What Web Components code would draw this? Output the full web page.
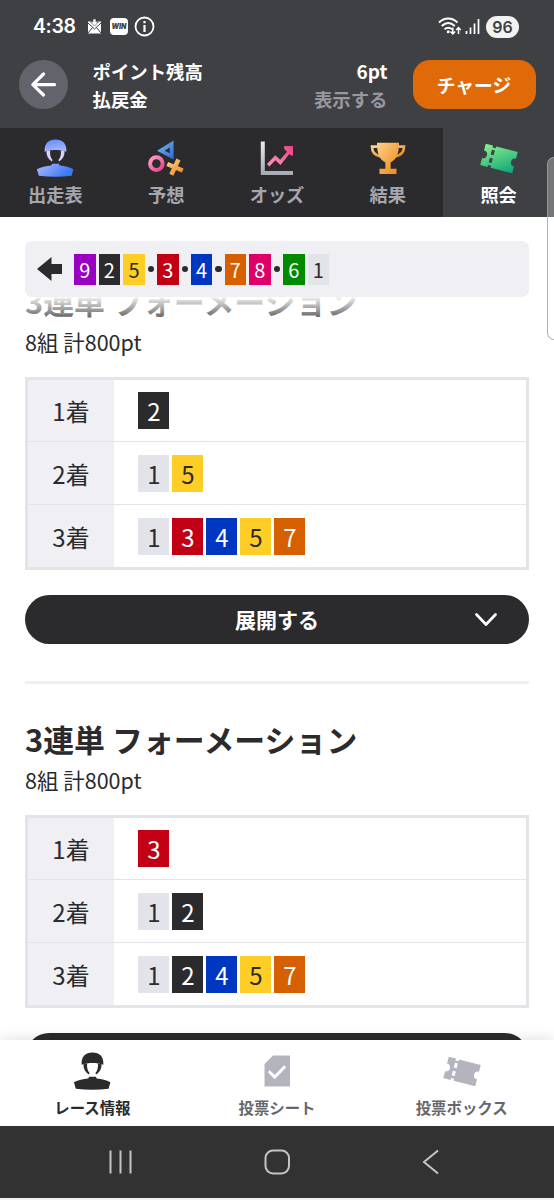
<!DOCTYPE html>
<html lang="ja">
<head>
<meta charset="utf-8">
<meta name="viewport" content="width=device-width">
<title>照会</title>
<style>
  body {
    margin: 0;
    background: #fff;
    color: #2b2b2d;
    font-family: "Noto Sans CJK JP", "Noto Sans", sans-serif;
  }
</style>
</head>
<body>
<race-app>
  <status-bar slot="top"></status-bar>
  <point-header slot="top" points="6pt"></point-header>
  <tab-bar slot="top">
    <tab-item icon="rider">出走表</tab-item>
    <tab-item icon="marks">予想</tab-item>
    <tab-item icon="odds">オッズ</tab-item>
    <tab-item icon="trophy">結果</tab-item>
    <tab-item icon="ticket" active>照会</tab-item>
  </tab-bar>

  <line-forecast slot="pinned" order="925.3.4.78.61"></line-forecast>

  <bet-card first="2" second="15" third="13457">
    <span slot="heading">3連単 フォーメーション</span>
    <span slot="summary">8組 計800pt</span>
  </bet-card>
  <bet-card first="3" second="12" third="12457">
    <span slot="heading">3連単 フォーメーション</span>
    <span slot="summary">8組 計800pt</span>
  </bet-card>

  <bottom-nav slot="bottom">
    <nav-item icon="rider" active>レース情報</nav-item>
    <nav-item icon="sheet">投票シート</nav-item>
    <nav-item icon="ticket">投票ボックス</nav-item>
  </bottom-nav>
  <system-nav slot="bottom"></system-nav>
</race-app>

<script>
const icons = {
  rider: `
<svg width="38" height="38" viewBox="0 0 38 38">
  <defs>
    <linearGradient id="r1" x1="0" y1="0" x2="0.3" y2="1"><stop offset="0" stop-color="#5a8bf8"/><stop offset="1" stop-color="#a9b4ff"/></linearGradient>
    <linearGradient id="r2" x1="0" y1="0" x2="1" y2="0.4"><stop offset="0" stop-color="#b3baff"/><stop offset="1" stop-color="#3978f5"/></linearGradient>
  </defs>
  <path fill="var(--ink, url(#r1))" d="M8.6 12.8C8.2 4.500 12.300.6 19.500.6s11.300 3.900 10.900 12.200c-7-2.300-14.800-2.300-21.800 0z"/>
  <path fill="var(--ink, #d5d3fb)" d="M10.400 12.200l3.700-.8c-.3 4.200.4 7.200 2.500 9.700l-.8 1.400c-3.600-2.400-5.400-5.700-5.400-10.300zM28.600 12.200l-3.700-.8c.3 4.200-.4 7.200-2.500 9.700l.8 1.400c3.600-2.400 5.400-5.700 5.400-10.300z"/>
  <path fill="var(--ink, url(#r2))" d="M.9 30.200c4.500-2 9.200-3.200 14.300-3.700l1-1.800h6.600l1 1.800c5.100.5 9.300 1.700 13.600 3.700l-1.800 6.600c-10.500 1.400-21.800 1.400-32.800 0z"/>
</svg>`,
  marks: `
<svg width="37" height="38" viewBox="0 0 37 38">
  <defs>
    <linearGradient id="m1" x1="0" y1="0" x2="1" y2="1"><stop offset="0" stop-color="#77c4ef"/><stop offset="1" stop-color="#2e63dc"/></linearGradient>
    <linearGradient id="m2" x1="0" y1="0" x2="1" y2="1"><stop offset="0" stop-color="#ff9fc4"/><stop offset="1" stop-color="#e83f8b"/></linearGradient>
    <linearGradient id="m3" x1="0" y1="0" x2="1" y2="1"><stop offset="0" stop-color="#ffd08a"/><stop offset="1" stop-color="#e88a20"/></linearGradient>
  </defs>
  <path fill="url(#m1)" fill-rule="evenodd" d="M25.600 1.500V20.500L9 11.800zM21.800 8.600L16.600 11.700 21.800 14.200z"/>
  <circle cx="8.400" cy="24.600" r="6.300" fill="none" stroke="url(#m2)" stroke-width="4"/>
  <path fill="none" stroke="url(#m3)" stroke-width="4.500" d="M30.500 20.500L23.300 35.800M19.300 25L34.700 31.500"/>
</svg>`,
  odds: `
<svg width="34" height="38" viewBox="0 0 34 38">
  <defs>
    <linearGradient id="o1" x1="0" y1="0" x2="0" y2="1"><stop offset="0" stop-color="#e9edf0"/><stop offset="1" stop-color="#a4a9b2"/></linearGradient>
    <linearGradient id="o2" x1="0" y1="1" x2="1" y2="0"><stop offset="0" stop-color="#ff9abf"/><stop offset="1" stop-color="#ea4186"/></linearGradient>
  </defs>
  <path fill="url(#o1)" d="M.8 2.500H4.800V32H33V36H.8z"/>
  <path fill="url(#o2)" d="M7 25L15.300 16.200 20.200 20.800 27.100 12.700 24.200 10V7H33V16.500H31L29.300 15 20.500 25.900 15.400 21.200 9.300 27.500z"/>
</svg>`,
  trophy: `
<svg width="36" height="38" viewBox="0 0 36 38">
  <defs>
    <linearGradient id="t1" x1="0" y1="0" x2="1" y2="1"><stop offset="0" stop-color="#ffd28c"/><stop offset="1" stop-color="#ed8518"/></linearGradient>
  </defs>
  <g fill="none" stroke="url(#t1)" stroke-width="2.600">
    <path d="M8 7.600H2C2 13.500 4.500 16.500 10.500 17.500M28 7.600H34C34 13.500 31.500 16.500 25.500 17.500"/>
  </g>
  <path fill="url(#t1)" d="M7 3.800H29C29 14 27 20.500 20.600 23.400V29.800H26.500V35H9.500V29.800H15.400V23.400C9 20.500 7 14 7 3.800z"/>
</svg>`,
  ticket: `
<svg width="38" height="38" viewBox="0 0 38 38">
  <defs>
    <linearGradient id="k1" x1="0" y1="0" x2="1" y2="1"><stop offset="0" stop-color="#8cf08b"/><stop offset="1" stop-color="#08a579"/></linearGradient>
  </defs>
  <g transform="rotate(14.500 19 19.500)" fill="var(--ink, url(#k1))">
    <path d="M2.500 8.500H10V10.500H13.200V8.500H35.500V15.400A4 4 0 0 0 35.500 23.400V30.500H13.200V28.500H10V30.500H2.500V23.400A4 4 0 0 0 2.500 15.400zM10 12.800V17.600H13V12.800zM10 21V25.800H13V21z" fill-rule="evenodd"/>
  </g>
</svg>`,
  sheet: `
<svg width="38" height="38" viewBox="0 0 38 38">
  <path fill="var(--ink)" d="M15 3.500H32V34.500H6.500V12z"/>
  <path fill="none" stroke="#fff" stroke-width="3" d="M10.800 19.200L16.700 25 27.200 14.200"/>
</svg>`,
};

class BaseElement extends HTMLElement {
  constructor() {
    super();
    this.root = this.attachShadow({mode: 'open'});
  }

  connectedCallback() {
    this.root.innerHTML = this.render();
  }
}

class RaceAppElement extends BaseElement {
  render() {
    return `
<style>
  :host {
    display: flex;
    flex-flow: column;
    height: 1200px;
    position: relative;
    overflow: hidden;
  }
  main {
    flex: 1;
    min-height: 0;
    padding: 62px 25px 0;
    overflow: hidden;
    position: relative;
  }
  #pinned {
    position: absolute;
    top: 0;
    left: 0;
    right: 0;
    padding: 24px 25px 29px;
    background: linear-gradient(#fff 80px, rgba(255, 255, 255, 0.9) 81px, rgba(255, 255, 255, 0));
  }
  /* edge panel handle, sits over the tabs and the page */
  #handle {
    position: absolute;
    top: 157px;
    right: -10px;
    width: 15px;
    height: 181px;
    border: 1.500px solid rgba(160, 160, 160, 0.8);
    border-radius: 7px;
    background: linear-gradient(rgba(200, 200, 200, 0.4) 59px, rgba(255, 255, 255, 0.4) 59px);
  }
</style>
<slot name="top"></slot>
<main>
  <slot></slot>
  <div id="pinned"><slot name="pinned"></slot></div>
</main>
<slot name="bottom"></slot>
<div id="handle"></div>
    `;
  }
}

class StatusBarElement extends BaseElement {
  render() {
    return `
<style>
  :host {
    display: flex;
    align-items: center;
    height: 53px;
    padding: 0 35px 0 33px;
    box-sizing: border-box;
    background: #3f4044;
    color: #fff;
    font: 600 19.500px/53px Inter, Roboto, sans-serif;
  }
  svg {
    display: block;
  }
  #time {
    width: 54px;
    letter-spacing: -0.4px;
  }
  #win {
    width: 18px;
    height: 17px;
    margin: 0 6px 0 8px;
    border-radius: 4px;
    background: #fff;
    color: #3f4044;
    font: italic 900 7px/17px Inter, sans-serif;
    text-align: center;
  }
  #wifi {
    margin-left: auto;
  }
  #battery {
    width: 33px;
    height: 22px;
    margin-left: 5px;
    border-radius: 11px;
    background: #f2f2f3;
    color: #3f4044;
    font-size: 16px;
    line-height: 22px;
    text-align: center;
  }
</style>
<span id="time">4:38</span>
<svg width="15" height="16" viewBox="0 0 15 16">
  <path fill="#fff" d="M1 2.500H14V14.500H1z"/>
  <path fill="none" stroke="#3f4044" stroke-width="1" d="M1 4L7.500 10 14 4M1 14L5.500 8.500M14 14L9.500 8.500"/>
  <path fill="#fff" stroke="#3f4044" stroke-width=".6" d="M6 0H9V3H11.500L7.500 7 3.500 3H6z"/>
</svg>
<span id="win">WIN</span>
<svg width="21" height="21" viewBox="0 0 21 21">
  <circle cx="10.500" cy="10.500" r="9" fill="none" stroke="#fff" stroke-width="1.800"/>
  <path stroke="#fff" stroke-width="2.200" d="M10.500 9V16M10.500 5V7.300"/>
</svg>
<svg id="wifi" width="24" height="19" viewBox="0 0 24 19">
  <g fill="none" stroke="#fff" stroke-width="1.900">
    <path d="M1 5.500C6.500.2 14 .2 19.500 5.500M3.700 9C8 5 12.500 5 16.800 9M6.500 12.300C9 10.200 11.500 10.200 14 12.300"/>
    <path stroke-width="1.500" d="M14.800 10.500V17M12.500 14.600L14.800 17 17.100 14.600M20.500 17V10.500M18.200 12.900L20.500 10.500 22.800 12.900"/>
  </g>
  <circle cx="10.200" cy="14.800" r="1.500" fill="#fff"/>
</svg>
<svg width="16" height="17" viewBox="0 0 16 17" style="margin-left: 3px">
  <path stroke="#fff" stroke-width="1.700" d="M1.500 13V16M5.500 9.500V16M9.500 5.500V16M13.500 1V16"/>
</svg>
<span id="battery">96</span>
    `;
  }
}

class PointHeaderElement extends BaseElement {
  render() {
    return `
<style>
  :host {
    display: flex;
    align-items: center;
    height: 75px;
    padding: 0 18.500px 12px;
    box-sizing: border-box;
    background: #3f4044;
    color: #fff;
    font-size: 18.400px;
    font-weight: 700;
    line-height: 28px;
  }
  #back {
    width: 49px;
    height: 49px;
    border-radius: 50%;
    background: #63636b;
  }
  #names {
    flex: 1;
    padding-left: 25px;
  }
  #values {
    text-align: right;
    padding-right: 25px;
  }
  #points {
    font-size: 19px;
  }
  #reveal {
    color: #98989f;
  }
  #charge {
    width: 123px;
    height: 49px;
    border-radius: 17px;
    background: #e06a07;
    font-size: 18.800px;
    line-height: 49px;
    text-align: center;
  }
</style>
<div id="back">
  <svg width="49" height="49" viewBox="0 0 49 49">
    <path fill="none" stroke="#fff" stroke-width="3.200" stroke-linecap="round" stroke-linejoin="round" d="M35.500 24.700H14M24.500 14L13.800 24.700 24.500 35"/>
  </svg>
</div>
<div id="names">
  <div>ポイント残高</div>
  <div>払戻金</div>
</div>
<div id="values">
  <div id="points">${this.getAttribute('points')}</div>
  <div id="reveal">表示する</div>
</div>
<div id="charge">チャージ</div>
    `;
  }
}

class TabBarElement extends BaseElement {
  render() {
    return `
<style>
  :host {
    display: grid;
    grid-template-columns: repeat(5, 1fr);
    height: 89px;
    background: #2b2b2d;
  }
</style>
<slot></slot>
    `;
  }
}

class TabItemElement extends BaseElement {
  render() {
    return `
<style>
  :host {
    display: flex;
    flex-flow: column;
    align-items: center;
    padding-top: 11px;
    color: #a6a6af;
    font-size: 18.200px;
    font-weight: 700;
    line-height: 28px;
  }
  :host([active]) {
    background: #3f4044;
    color: #fff;
  }
  svg {
    display: block;
    margin-bottom: 3px;
  }
</style>
${icons[this.getAttribute('icon')]}
<div><slot></slot></div>
    `;
  }
}

class NumberTileElement extends BaseElement {
  render() {
    return `
<style>
  :host {
    display: block;
    width: 31px;
    height: 37px;
    font-size: 24px;
    line-height: 38px;
    text-align: center;
    color: #fff;
  }
  :host([small]) {
    width: 21.600px;
    height: 31px;
    font-size: 20px;
    line-height: 31px;
  }
  :host([n="1"]) { background: #e3e4ea; color: #2b2b2d; }
  :host([n="2"]) { background: #2b2b2d; }
  :host([n="3"]) { background: #c10015; }
  :host([n="4"]) { background: #0037c1; }
  :host([n="5"]) { background: #ffce26; color: #2b2b2d; }
  :host([n="6"]) { background: #008a00; }
  :host([n="7"]) { background: #d66000; }
  :host([n="8"]) { background: #dc0068; }
  :host([n="9"]) { background: #9a00c1; }
</style>
${this.getAttribute('n')}
    `;
  }
}

class LineForecastElement extends BaseElement {
  render() {
    const parts = this.getAttribute('order').split('').map((c) => {
      return c === '.' ? '<i></i>' : `<number-tile small n="${c}"></number-tile>`;
    });
    return `
<style>
  :host {
    display: flex;
    align-items: center;
    gap: 3px;
    height: 56px;
    padding-left: 12px;
    border-radius: 7px;
    background: #f0eff4;
  }
  svg {
    margin-right: 9px;
  }
  i {
    width: 6.200px;
    height: 6.200px;
    border-radius: 50%;
    background: #2b2b2d;
  }
</style>
<svg width="25" height="24" viewBox="0 0 25 24">
  <path fill="#2b2b2d" d="M0 12L14.500 0V7H25V17H14.500V24z"/>
</svg>
${parts.join('')}
    `;
  }
}

class BetCardElement extends BaseElement {
  _row(label, attr) {
    const tiles = this.getAttribute(attr).split('').map((n) => `<number-tile n="${n}"></number-tile>`);
    return `<div class="row"><div class="label">${label}</div><div class="tiles">${tiles.join('')}</div></div>`;
  }

  render() {
    return `
<style>
  :host {
    display: block;
    margin-bottom: 33px;
    border-bottom: 3px solid #efeff2;
    padding-bottom: 37px;
  }
  h2 {
    margin: 0;
    font-size: 30.900px;
    font-weight: 700;
    line-height: 43px;
  }
  p {
    margin: 0 0 15px;
    font-size: 21.500px;
    line-height: 40px;
  }
  #table {
    display: grid;
    grid-template-rows: 61px 63px 63px;
    border: 3px solid #e3e4ea;
    margin-right: 0.500px;
  }
  .row {
    display: flex;
  }
  .row + .row {
    border-top: 1.500px solid #e3e4ea;
  }
  .label {
    width: 86px;
    display: flex;
    align-items: center;
    justify-content: center;
    background: #f0eff4;
    font-size: 24px;
  }
  .tiles {
    display: flex;
    align-items: center;
    gap: 3px;
    padding-left: 24.300px;
  }
</style>
<h2><slot name="heading"></slot></h2>
<p><slot name="summary"></slot></p>
<div id="table">
  ${this._row('1着', 'first')}
  ${this._row('2着', 'second')}
  ${this._row('3着', 'third')}
</div>
<expand-button>展開する</expand-button>
    `;
  }
}

class ExpandButtonElement extends BaseElement {
  render() {
    return `
<style>
  :host {
    display: grid;
    grid-template-columns: 1fr auto 1fr;
    align-items: center;
    height: 49px;
    margin-top: 25px;
    border-radius: 24.500px;
    background: #2b2b2d;
    color: #fff;
    font-size: 21px;
    font-weight: 700;
    line-height: 48px;
  }
  svg {
    grid-column: 3;
    justify-self: end;
    margin-right: 31px;
  }
  span {
    grid-column: 2;
    padding-bottom: 1px;
  }
</style>
<span><slot></slot></span>
<svg width="24" height="16" viewBox="0 0 24 16">
  <path fill="none" stroke="#fff" stroke-width="2.700" stroke-linecap="round" stroke-linejoin="round" d="M2.500 2.500L12 12.500 21.500 2.500"/>
</svg>
    `;
  }
}

class BottomNavElement extends BaseElement {
  render() {
    return `
<style>
  :host {
    display: grid;
    grid-template-columns: repeat(3, 1fr);
    height: 86px;
    background: #fff;
    box-shadow: 0 0 14px rgba(0, 0, 0, 0.14);
    position: relative;
  }
</style>
<slot></slot>
    `;
  }
}

class NavItemElement extends BaseElement {
  render() {
    return `
<style>
  :host {
    --ink: #b4b4be;
    display: flex;
    flex-flow: column;
    align-items: center;
    padding-top: 12px;
    color: #66666d;
    font-size: 15.400px;
    font-weight: 700;
    line-height: 24px;
  }
  :host([active]) {
    --ink: #2b2b2d;
    color: #2b2b2d;
  }
  svg {
    display: block;
    margin-bottom: 5px;
  }
</style>
${icons[this.getAttribute('icon')]}
<div><slot></slot></div>
    `;
  }
}

class SystemNavElement extends BaseElement {
  render() {
    return `
<style>
  :host {
    display: flex;
    align-items: center;
    justify-content: space-between;
    height: 74px;
    padding: 0 114px 0 108px;
    box-sizing: border-box;
    background: #323232;
    border-bottom: 2px solid #f1f1f1;
    position: relative;
  }
  svg {
    fill: none;
    stroke: #c4c4c4;
    stroke-width: 2;
  }
</style>
<svg width="25" height="26" viewBox="0 0 25 26"><path d="M2.500 1.500V24.500M12.500 1.500V24.500M22.500 1.500V24.500"/></svg>
<svg width="28" height="26" viewBox="0 0 28 26"><rect x="1.500" y="1.500" width="23.500" height="23" rx="7.500"/></svg>
<svg width="18" height="26" viewBox="0 0 18 26"><path d="M16 1.500L2 13 16 24.500"/></svg>
    `;
  }
}

customElements.define('number-tile', NumberTileElement);
customElements.define('expand-button', ExpandButtonElement);
customElements.define('status-bar', StatusBarElement);
customElements.define('point-header', PointHeaderElement);
customElements.define('tab-item', TabItemElement);
customElements.define('tab-bar', TabBarElement);
customElements.define('line-forecast', LineForecastElement);
customElements.define('bet-card', BetCardElement);
customElements.define('nav-item', NavItemElement);
customElements.define('bottom-nav', BottomNavElement);
customElements.define('system-nav', SystemNavElement);
customElements.define('race-app', RaceAppElement);
</script>
</body>
</html>
